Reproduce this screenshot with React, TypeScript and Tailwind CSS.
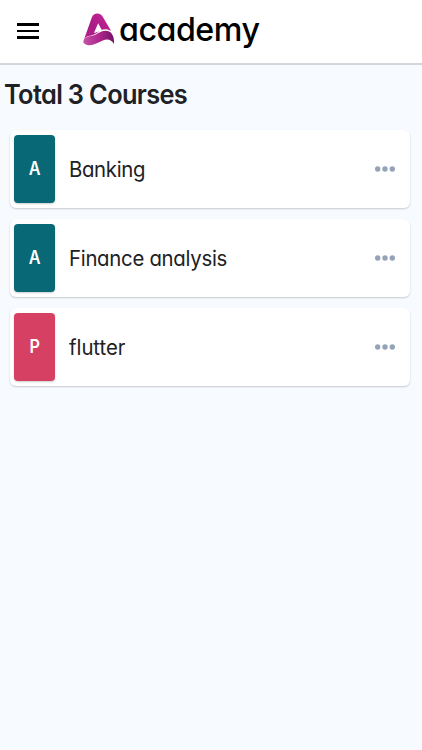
interface Course {
  id: number;
  initial: string;
  title: string;
  color: string;
  titleClass: string;
}

const courses: Course[] = [
  { id: 1, initial: 'A', title: 'Banking', color: 'bg-[#086875]', titleClass: 'tracking-[-0.35px]' },
  { id: 2, initial: 'A', title: 'Finance analysis', color: 'bg-[#086875]', titleClass: 'tracking-[-0.3px]' },
  { id: 3, initial: 'P', title: 'flutter', color: 'bg-[#d64063]', titleClass: 'tracking-[-0.05px]' },
];

function Logo() {
  return (
    <svg width="32" height="34" viewBox="0 0 32 34" className="block shrink-0">
      <defs>
        <linearGradient id="peak" x1="0" y1="1" x2="1" y2="0">
          <stop offset="0" stopColor="#b8218e" />
          <stop offset="0.4" stopColor="#a81c84" />
          <stop offset="1" stopColor="#cb259b" />
        </linearGradient>
        <linearGradient id="wave" x1="0" y1="0" x2="1" y2="0">
          <stop offset="0" stopColor="#c455a8" />
          <stop offset="0.5" stopColor="#b0278e" />
          <stop offset="1" stopColor="#761267" />
        </linearGradient>
      </defs>
      <path
        d="M0.8 27 L8.8 4.6 C10.6 -0.8 17.6 -0.9 20 4.2 L28 17.8 C24.6 15.8 21.6 15.8 18.6 16.8 L15.2 10.2 L11 19.8 C12.6 19.8 14.4 18.8 16.6 17.9 C13 20.6 9 22.8 5.6 22.9 C3.4 23.2 1.8 24.8 0.8 27 Z"
        fill="url(#peak)"
      />
      <path
        d="M0.6 27.6 C2 23.4 5.4 23.6 9 22.8 C14.8 21.4 17.6 17.8 22.4 17.8 C28.8 17.8 31.6 23.6 31 31 C28.6 26.8 24.4 25.4 19.8 27.6 C14.8 30 9.2 33.2 4.2 32 C0.9 31.1 -0.3 29.6 0.6 27.6 Z"
        fill="url(#wave)"
      />
    </svg>
  );
}

function MoreIcon() {
  return (
    <svg width="20" height="6" viewBox="0 0 20 6" fill="#94a3b8" className="block">
      <circle cx="2.7" cy="3" r="2.7" />
      <circle cx="10" cy="3" r="2.7" />
      <circle cx="17.3" cy="3" r="2.7" />
    </svg>
  );
}

function CourseCard({ course }: { course: Course }) {
  return (
    <li className="flex h-[78px] items-center rounded-md bg-white pl-1 pr-[15px] shadow-[0_1px_2px_rgba(0,0,0,0.2)]">
      <div
        className={`flex h-[68px] w-[41px] shrink-0 items-center justify-center rounded shadow-[0_1px_2px_rgba(0,0,0,0.2)] ${course.color}`}
      >
        <span className="text-[18px] font-semibold leading-none text-white">
          <span className="inline-block scale-x-90">{course.initial}</span>
        </span>
      </div>
      <h2
        className={`ml-[14px] flex-1 origin-left scale-x-[0.97] whitespace-nowrap pt-[2px] text-[21px] leading-7 text-[#202124] ${course.titleClass}`}
      >
        {course.title}
      </h2>
      <button type="button" aria-label="More options">
        <MoreIcon />
      </button>
    </li>
  );
}

export default function App() {
  return (
    <div className="min-h-screen bg-[#f7fbff] font-['Inter','Open_Sans',sans-serif] [font-feature-settings:'cv11']">
      <header className="flex h-[65px] items-start border-b-2 border-[#d3d6da] bg-white">
        <button type="button" aria-label="Open menu" className="ml-[17px] mt-[23px] flex w-[22px] flex-col gap-[4px]">
          <span className="h-[2.5px] bg-black" />
          <span className="h-[2.5px] bg-black" />
          <span className="h-[2.5px] bg-black" />
        </button>
        <div className="ml-[44px] mt-[13px] flex items-start">
          <Logo />
          <span className="ml-[4px] mt-[-4px] origin-left scale-x-[0.976] text-[33px] font-medium leading-10 tracking-[-0.5px] text-black">
            academy
          </span>
        </div>
      </header>
      <main>
        <h1 className="ml-1 origin-left scale-x-[0.94] whitespace-nowrap pt-[12px] text-[27px] font-semibold leading-9 tracking-[-0.7px] text-[#202124]">
          Total 3 Courses
        </h1>
        <ul className="ml-[10px] mr-3 mt-[16.5px] flex flex-col gap-[11px]">
          {courses.map(course => (
            <CourseCard key={course.id} course={course} />
          ))}
        </ul>
      </main>
    </div>
  );
}
